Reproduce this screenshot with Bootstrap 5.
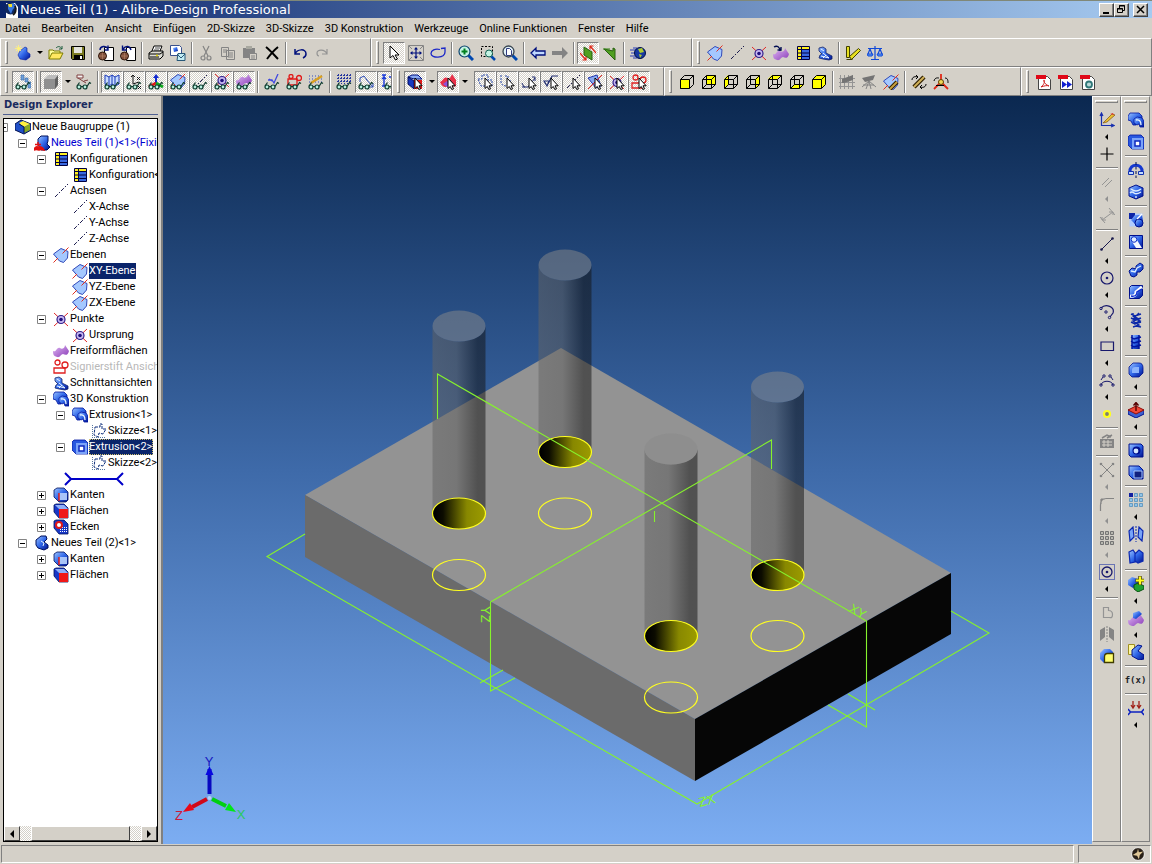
<!DOCTYPE html>
<html lang="de">
<head>
<meta charset="utf-8">
<meta name="viewport" content="width=device-width, initial-scale=1">
<title>Neues Teil (1) - Alibre-Design Professional</title>
<link href="https://cdn.jsdelivr.net/npm/bootstrap@5.3.0/dist/css/bootstrap.min.css" rel="stylesheet">
<style>
:root{--face:#d4d0c8;--shade:#808080;--ink:#000}
body{background:var(--face);font-family:Roboto,"Liberation Sans",sans-serif;font-size:11px;line-height:16px;color:var(--ink)}
svg{display:block;flex:none}
.titlebar{height:18px;border-top:1px solid #808878;background:linear-gradient(90deg,#0a246a,#a6caf0)}
.titlebar h1{font:13px/16px "DejaVu Sans",sans-serif;color:#fff;margin:0}
.winbtn{width:15px;height:14px;padding:0;border:1px solid;border-color:#fff #404040 #404040 #fff;border-radius:0;background:var(--face);box-shadow:inset -1px -1px var(--shade)}
.menubar{height:20px;gap:11px;padding:1px 5px 0}
.menubar a{color:#000;text-decoration:none}
.band{height:29px;border:1px solid;border-color:#fff var(--shade) var(--shade) #fff;padding-left:4px;overflow:hidden;min-width:0}
.grip{width:3px;height:23px;margin-right:4px;border:1px solid;border-color:#fff var(--shade) var(--shade) #fff;flex:none}
.tb{width:22px;height:22px;padding:0;border:1px solid transparent;border-radius:0;display:flex;align-items:center;justify-content:center;flex:none}
.tb svg,.icn{width:16px;height:16px}
.tb.active,.tb.active:hover{border-color:var(--shade) #fff #fff var(--shade);background:repeating-conic-gradient(#fff 0 25%,#d4d0c8 0 50%) 0 0/2px 2px}
.drop{width:11px;height:22px;padding:0;border:0;flex:none;background:none;display:flex;align-items:center;justify-content:center}
.drop::before{content:"";border:3px solid transparent;border-top-color:#000;border-bottom:0}
.vs{width:2px;height:22px;margin:0 2px;border-left:1px solid var(--shade);border-right:1px solid #fff;flex:none}
.w-a{flex:0 0 371px}.w-b{flex:0 0 321px}
.w-d{flex:0 0 392px}.w-e{flex:0 0 272px}.w-f{flex:0 0 357px}
.explorer{width:161px;padding:0 3px 2px;flex:none}
.explorer h2{font:bold 11px/18px "DejaVu Sans Condensed","DejaVu Sans",sans-serif;font-stretch:condensed;color:#1a2a5e;margin:0 0 3px;padding-left:1px;height:19px;border-bottom:1px solid #506090}
.treebox{background:#fff;border:1px solid #000;overflow:hidden;min-height:0}
.tree{white-space:nowrap}
.tree ul,ul.tree{list-style:none;margin:0;padding:0}
.tree ul{padding-left:19px}
ul.tree{margin-left:-10px}
.node{display:flex;height:16px;align-items:center}
.exp,.ico{width:19px;flex:none;display:flex;justify-content:center}
button.exp{border:0;background:none;padding:0}
.exp svg{width:9px;height:9px}
.sel{background:#0a246a;color:#fff;padding:0 1px 0 0}
.sel.focused{outline:1px dotted #d0c070;outline-offset:-1px}
.fixed-part{color:#0000d0}
.dimmed{color:#b8b8b8}
.rollback{margin-left:13px}
.hbar{height:15px;flex:none;background:repeating-conic-gradient(#fff 0 25%,#d4d0c8 0 50%) 0 0/2px 2px}
.hbar button{padding:0;border:1px solid;border-color:#fff #404040 #404040 #fff;background:var(--face);height:15px;width:16px;display:flex;align-items:center;justify-content:center}
.hbar .thumb{width:99px;margin:0 11px}
.workarea{min-height:0;padding-right:2px}
.view{border-left:2px solid var(--shade);background:linear-gradient(#0b2850,#3e6aa9 50%,#7cadf2);min-width:0;min-height:0}
.side{width:29px;flex:none;border:1px solid;border-color:#fff var(--shade) var(--shade) #fff;padding-top:3px;margin-bottom:2px;display:flex;flex-direction:column;align-items:center}
.side .grip{width:23px;height:3px;margin:0 0 6px}
.side .drop{width:22px;height:12px}
.side .drop::before{border:3px solid transparent;border-right-color:#000;border-left:0}
.side .drop:disabled::before{border-right-color:#909090}
.hs{width:22px;height:2px;margin:2px 0;border-top:1px solid var(--shade);border-bottom:1px solid #fff;flex:none}
.fx{font:bold 9px "DejaVu Sans Mono",monospace}
.status{height:20px;flex:none;padding:1px}
.pane{border:1px solid;border-color:var(--shade) #fff #fff var(--shade)}
.p-s{width:73px;padding-right:5px}
</style>
</head>
<body class="vh-100 d-flex flex-column overflow-hidden">

<svg width="0" height="0" class="position-absolute" aria-hidden="true">
<defs>
<linearGradient id="gb" x1="0" y1="0" x2="1" y2="1"><stop stop-color="#9cc4ff"/><stop offset=".5" stop-color="#2f66e8"/><stop offset="1" stop-color="#00108c"/></linearGradient>
<linearGradient id="gp" x1="0" y1="0" x2="1" y2="1"><stop stop-color="#e0b8f4"/><stop offset="1" stop-color="#8a3cb8"/></linearGradient>
<!-- overlays -->
<symbol id="glasses" viewBox="0 0 16 16"><g fill="#b8f0e0" stroke="#0b3a2c" stroke-width="1.2"><circle cx="3" cy="13" r="2"/><circle cx="9" cy="13" r="2"/><path d="M5 12.500h2M1 12l2.500-3.500M11 12.500l2.500-4 1.500 1" fill="none"/></g></symbol>
<symbol id="cur" viewBox="0 0 16 16"><path d="M8 4v10.500l2.300-2 1.500 3 1.700-.7-1.500-3h3.200z" fill="#fff" stroke="#000"/></symbol>
<!-- files -->
<symbol id="new" viewBox="0 0 16 16"><path d="M5 6l5-4 2 1v4l3 2v3l-4 3-6-1-2-4z" fill="url(#gb)" stroke="#0018a0" stroke-width=".6"/><path d="M3.500 0v7M0 3.500h7M1 1l5 5M6 1L1 6" stroke="#fff27c" stroke-width=".9"/></symbol>
<symbol id="open" viewBox="0 0 16 16"><path d="M1 14V5h4l1 1h6v3" fill="#ffff9c" stroke="#7c7c00"/><path d="M1 14l3-6h11l-3 6z" fill="#ffe860" stroke="#7c7c00"/><path d="M8 3c2-2 4-2 6 1M14 1v3h-3" fill="none" stroke="#1c5c3c"/></symbol>
<symbol id="save" viewBox="0 0 16 16"><path d="M1.500 1.500h13v13h-12l-1-1z" fill="#7a7a20" stroke="#000"/><path d="M4 2h8v6H4z" fill="#e4e4dc"/><path d="M4 10h9v4H4z" fill="#000"/><path d="M10 11h2v3h-2z" fill="#fff"/></symbol>
<symbol id="inbox" viewBox="0 0 16 16"><path d="M6.500 2.500h9v13h-9z" fill="#fff" stroke="#000"/><circle cx="4.500" cy="11" r="4" fill="#80503c" stroke="#30180c"/><path d="M1 11h7M4.500 8v6" stroke="#b88868" stroke-width=".6"/><path d="M2 5c0-4 6-5 8-1M10 .5V5H6.500" fill="none" stroke="#00107c" stroke-width="1.400"/></symbol>
<symbol id="outbox" viewBox="0 0 16 16"><path d="M6.500 2.500h9v13h-9z" fill="#fff" stroke="#000"/><circle cx="4.500" cy="11" r="4" fill="#80503c" stroke="#30180c"/><path d="M1 11h7M4.500 8v6" stroke="#b88868" stroke-width=".6"/><path d="M11 5C10 1 6 0 3 4M2.500 .5V5H7" fill="none" stroke="#00107c" stroke-width="1.400"/></symbol>
<symbol id="print" viewBox="0 0 16 16"><path d="M4 6l2-5h8l-2 5" fill="#fff" stroke="#000"/><path d="M7 3h5M6 5h5" stroke="#000" stroke-width=".7"/><path d="M1 8l3-2h11v5l-3 3H1z" fill="#dcdcd4" stroke="#000"/><path d="M1 9h11l3-2M2 12h9" fill="none" stroke="#000"/><path d="M8 10.500h2" stroke="#e8d800" stroke-width="1.500"/></symbol>
<symbol id="preview" viewBox="0 0 16 16"><path d="M.5.5h9l2 2v8h-11z" fill="#fff" stroke="#38508c"/><path d="M3 3l4-1 1 4-4 1z" fill="url(#gb)"/><path d="M7 15.500l1-7h7v7z" fill="#c4ecf4" stroke="#285878"/><path d="M7 9l4 4 4-4" fill="none" stroke="#285878"/></symbol>
<symbol id="cut" viewBox="0 0 16 16"><g fill="none" stroke="#848484" stroke-width="1.200"><path d="M5 1l5 10M11 1L6 11"/><circle cx="5" cy="13" r="2"/><circle cx="11" cy="13" r="2"/></g></symbol>
<symbol id="copy" viewBox="0 0 16 16"><path d="M1.500 2.500h7v9h-7zM6.500 5.500h8v9h-8z" fill="#d4d0c8" stroke="#848484"/><path d="M3 5h4M3 7h3M8 8h5M8 10h5M8 12h5" stroke="#848484"/></symbol>
<symbol id="paste" viewBox="0 0 16 16"><path d="M1 3h12v10H1z" fill="#848484"/><path d="M4 1h6v3H4z" fill="#a8a8a0"/><path d="M7.500 8.500h7v6h-7z" fill="#d4d0c8" stroke="#848484"/><path d="M9 11h4M9 13h4" stroke="#848484"/></symbol>
<symbol id="del" viewBox="0 0 16 16"><path d="M2 2c4 3 8 8 12 12M14 2C9 6 6 10 3 14" stroke="#000" stroke-width="2" fill="none"/></symbol>
<symbol id="undo" viewBox="0 0 16 16"><path d="M3 4v5h5M3 9c2-5 11-6 11 0 0 2-1 3-3 4" fill="none" stroke="#00107c" stroke-width="1.500"/></symbol>
<symbol id="redo" viewBox="0 0 16 16"><path d="M13 4v5H8M13 9C11 4 3 4 3 8c0 2 1 3 2 3" fill="none" stroke="#949494" stroke-width="1.200"/></symbol>
<!-- view -->
<symbol id="arrow" viewBox="0 0 16 16"><path d="M4 1v12l3-2.500L9.500 15l2-1-2.500-4h4z" fill="#fff" stroke="#000"/></symbol>
<symbol id="pan" viewBox="0 0 16 16"><path d="M.5.5h15v15H.5z" fill="none" stroke="#848484"/><path d="M1 1l3 3M15 1l-3 3M1 15l3-3M15 15l-3-3" stroke="#848484"/><path d="M8 3v10M3 8h10" stroke="#00107c" stroke-width="1.200"/><path d="M8 2l2 2.500H6zM8 14l2-2.500H6zM2 8l2.500-2v4zM14 8l-2.500-2v4z" fill="#00107c"/></symbol>
<symbol id="rot" viewBox="0 0 16 16"><path d="M10 4.500C5 3 1 5.500 1 8.500c0 5 14 5 14-1.500M11 3.500l4-.5v4" fill="none" stroke="#1c28c8" stroke-width="1.300"/></symbol>
<symbol id="zin" viewBox="0 0 16 16"><path d="M10 10l5 5" stroke="#0048b0" stroke-width="3"/><circle cx="6.500" cy="6.500" r="5.500" fill="#c4f4e4" stroke="#0c4470" stroke-width="1.200"/><path d="M6.500 3.500v6M3.500 6.500h6" stroke="#008020" stroke-width="2"/></symbol>
<symbol id="zwin" viewBox="0 0 16 16"><path d="M1.500 1.500h11v10h-11z" fill="none" stroke="#000" stroke-dasharray="2 1.500"/><path d="M11 11l4 4" stroke="#0048b0" stroke-width="2.500"/><circle cx="9" cy="8.500" r="3.500" fill="#c4f4e4" stroke="#0c6050"/></symbol>
<symbol id="zfit" viewBox="0 0 16 16"><path d="M10 10l5 5" stroke="#0048b0" stroke-width="3"/><circle cx="6.500" cy="6.500" r="5.500" fill="#e0f0f8" stroke="#384450" stroke-width="1.300"/><path d="M4.500 3.500h3l2 2v5h-5z" fill="#fff" stroke="#303c80"/></symbol>
<symbol id="back" viewBox="0 0 16 16"><path d="M1 8l5-5v3h9v4H6v3z" fill="#c0d8ff" stroke="#00107c" stroke-width="1.300"/></symbol>
<symbol id="fwd" viewBox="0 0 16 16"><path d="M16 8l-6-6v4H0v4h10v4z" fill="#848484"/></symbol>
<symbol id="gpl" viewBox="0 0 16 16"><path d="M4 2l8 5v8l-8-5z" fill="#50a020" stroke="#286010"/><path d="M0 8l6 7M2.500 15H6v-3.500M10 1l6 7M10 4.500V1h3.500" stroke="#e02818" stroke-width="1.200" fill="none"/></symbol>
<symbol id="gpl2" viewBox="0 0 16 16"><path d="M2 4l9 2V3l2 1v11z" fill="#50a020" stroke="#286010"/><path d="M1 4h7" stroke="#308010"/></symbol>
<symbol id="globe" viewBox="0 0 16 16"><path d="M0 5h8M1 8h6M0 11h8M3 3h4M3 13h4" stroke="#283cb8"/><circle cx="10" cy="8" r="5.500" fill="#1838a0" stroke="#001048"/><path d="M8 4l4-1 2 4-4 1zM9 9l3 1-2 3z" fill="#b0cc30"/></symbol>
<!-- reference geometry -->
<symbol id="plane" viewBox="0 0 16 16"><path d="M.5 7L8 1.500l7 3L14.500 11l-4 4.500-4-1.500z" fill="#a4c8ff" stroke="#3048b8"/><path d="M15.500.5L9.500 6.500M5 11L.5 15.500" stroke="#e03020"/></symbol>
<symbol id="axis" viewBox="0 0 16 16"><path d="M2 14L15 1" stroke="#18184c" stroke-dasharray="4 1.500 1.500 1.500"/></symbol>
<symbol id="point" viewBox="0 0 16 16"><path d="M1 2l14 13M15 2L1 15" stroke="#e02828"/><circle cx="8" cy="8.500" r="4" fill="#c8b8f0" stroke="#30208c" stroke-width="1.200"/><circle cx="8" cy="8.500" r="1.800" fill="#20107c"/></symbol>
<symbol id="surf" viewBox="0 0 16 16"><path d="M0 8c3 2 4-5 7-3 2 2 5 0 5-3l4 6c-1 5-4 4-6 3-2 0-3 4-6 3C1 13 0 12 0 8z" fill="url(#gp)"/></symbol>
<symbol id="surfn" viewBox="0 0 16 16"><use href="#surf" y="1"/><path d="M1 2c3-2 6 0 6 4M4.500 5H8V2" fill="none" stroke="#000c50" stroke-width="1.400"/></symbol>
<symbol id="table" viewBox="0 0 16 16"><path d="M2 2h12v12H2z" fill="#3868e0"/><path d="M2 2h4v12H2zM2 2h12v2H2z" fill="#fff020"/><path d="M2.500 1.500h12v13h-12zM6.500 2v12M2 4.500h12M2 8h12M2 11.500h12" fill="none" stroke="#000040"/></symbol>
<symbol id="sect" viewBox="0 0 16 16"><path d="M2 3l4-1 3 2v4l4 2 2 1v3l-3 1-6-1-4-1 1-3 2-1-3-3z" fill="url(#gb)" stroke="#102068" stroke-width=".8"/><path d="M4 4l3 2M6 8l6 5M4 11l8 2M6 13l3-3" stroke="#e8f4ff"/></symbol>
<symbol id="meas" viewBox="0 0 16 16"><path d="M1.500 1.500h3v11h-3zM4.500 11.500l9-8 2 2-9 9z" fill="#e8e020" stroke="#404000"/><path d="M1.500 14.500h6" stroke="#404000"/></symbol>
<symbol id="scale" viewBox="0 0 16 16"><path d="M8 1v13M4 14.500h8M1 3.500h14M3 4L1 9M3 4l2 5M13 4l-2 5M13 4l2 5" stroke="#1048d8" fill="none" stroke-width="1.200"/><path d="M0 9h6l-1 2H1zM10 9h6l-1 2h-4z" fill="#60a0f8" stroke="#1048d8"/></symbol>
<!-- visibility toggles -->
<symbol id="v1" viewBox="0 0 16 16"><path d="M6 1h3v5H6zM10 4h3v4h-3zM13 8h3v6h-3z" fill="#70a0d8" stroke="#3868a8" stroke-width=".6"/><use href="#glasses"/></symbol>
<symbol id="cube" viewBox="0 0 16 16"><path d="M1 5l4-4h10l-3 4z" fill="#bcbcbc"/><path d="M1 5h11v10H1z" fill="#909090"/><path d="M12 5l3-4v10l-3 4z" fill="#606060"/></symbol>
<symbol id="v2" viewBox="0 0 16 16"><path d="M1 1h6v3H1zM2 4l8 5M8 7l4-1" fill="#f4f4f4" stroke="#804040"/><use href="#glasses"/></symbol>
<symbol id="v3" viewBox="0 0 16 16"><path d="M1 1l4 2 3-2 3 2 4-2v9l-4 2-3-2-3 2-4-2zM5 3v8M8 1v9M11 3v8" fill="#c8dcff" stroke="#1838b8"/><use href="#glasses"/></symbol>
<symbol id="v4" viewBox="0 0 16 16"><path d="M7 10V1M5 3l2-2 2 2M11 3l3 3M14 3l-3 3M7 10l6-2M12 12l3 3M15 12l-3 3" fill="none" stroke="#181818"/><use href="#glasses"/></symbol>
<symbol id="v5" viewBox="0 0 16 16"><path d="M8 10V2" stroke="#1028d0" stroke-width="2"/><path d="M8 0l3 4H5z" fill="#1028d0"/><path d="M8 9l-7 4" stroke="#e01818" stroke-width="3"/><path d="M8 9l7 4" stroke="#10a820" stroke-width="3"/><use href="#glasses"/></symbol>
<symbol id="v6" viewBox="0 0 16 16"><use href="#plane" y="-1"/><use href="#glasses"/></symbol>
<symbol id="v7" viewBox="0 0 16 16"><use href="#axis"/><use href="#glasses"/></symbol>
<symbol id="v8" viewBox="0 0 16 16"><use href="#point" y="-2"/><use href="#glasses"/></symbol>
<symbol id="v9" viewBox="0 0 16 16"><use href="#surf" y="-2"/><use href="#glasses"/></symbol>
<symbol id="v10" viewBox="0 0 16 16"><path d="M4 6h4l2 3 4-9M5 5l3 2" fill="none" stroke="#4048e0" stroke-width="1.300"/><use href="#glasses"/></symbol>
<symbol id="v11" viewBox="0 0 16 16"><g fill="none" stroke="#e01818" stroke-width="1.300"><circle cx="5" cy="2.500" r="2"/><path d="M2 5h9v6H2z"/><circle cx="13" cy="4" r="2.500"/></g><use href="#glasses"/></symbol>
<symbol id="v12" viewBox="0 0 16 16"><path d="M1 2h14M1 5h14M1 8h14" stroke="#3048c0" stroke-dasharray="1 2"/><path d="M3 9L14 2" stroke="#d8a020" stroke-width="2.500"/><use href="#glasses"/></symbol>
<symbol id="v13" viewBox="0 0 16 16"><path d="M1 1.500h14M1 4.500h14M1 7.500h14M2.500 0v10M5.500 0v10M8.500 0v10M11.500 0v10M14.500 0v10" stroke="#2838a0" stroke-dasharray="2 1"/><use href="#glasses"/></symbol>
<symbol id="v14" viewBox="0 0 16 16"><path d="M2 8V4l4-2 3 4M8 5l7 8M15 9v4h-4" fill="none" stroke="#2848b0"/><use href="#glasses"/></symbol>
<symbol id="v15" viewBox="0 0 16 16"><path d="M2 1h4M4 1v11M2 12h4M4 3l-2 2M4 3l2 2M9 3h3" fill="none" stroke="#1838d8" stroke-width="1.400"/><use href="#glasses" x="4"/></symbol>
<!-- selection filters -->
<symbol id="s1" viewBox="0 0 16 16"><path d="M1 3l4-2h6l4 4H7z" fill="#88a8f0" stroke="#001080"/><path d="M1 3l6 4v8l-6-5z" fill="#1838c0" stroke="#000c60"/><path d="M7 6h8v9H7z" fill="#e01818"/><use href="#cur"/></symbol>
<symbol id="s2" viewBox="0 0 16 16"><path d="M0 8c3-1 4-6 7-4s4-2 5-4l4 6v6c-3 2-5-2-8 0s-6 1-8-4z" fill="#e83048"/><path d="M3 10l4-3 3 4-3 2z" fill="#9050d8"/><use href="#cur"/></symbol>
<symbol id="s3" viewBox="0 0 16 16"><path d="M1 5h4V1h6v5h4v6H4z" fill="none" stroke="#2848a8" stroke-dasharray="2 1"/><use href="#cur"/></symbol>
<symbol id="s4" viewBox="0 0 16 16"><path d="M2 1v7c0 4 6 5 9 3M6 2h3v5h4" fill="none" stroke="#2848a8" stroke-dasharray="2 1"/><use href="#cur"/></symbol>
<symbol id="s5" viewBox="0 0 16 16"><path d="M1 9l2 4h4l7-9M1 13h3M11 3h3v4" fill="none" stroke="#202c70"/><use href="#cur"/></symbol>
<symbol id="s6" viewBox="0 0 16 16"><path d="M1 7h5l-2 5zM5 10l4-8h6" fill="none" stroke="#202c70" stroke-width="1.200"/><use href="#cur"/></symbol>
<symbol id="s7" viewBox="0 0 16 16"><use href="#axis"/><use href="#cur"/></symbol>
<symbol id="s8" viewBox="0 0 16 16"><path d="M1 4l9-3 4 11-5 2z" fill="#88a8f0" stroke="#2438b0"/><path d="M15 1L1 15" stroke="#e02020"/><use href="#cur"/></symbol>
<symbol id="s9" viewBox="0 0 16 16"><use href="#point"/><use href="#cur"/></symbol>
<symbol id="red" viewBox="0 0 16 16"><g fill="none" stroke="#e02020" stroke-width="1.300"><circle cx="4.500" cy="3.500" r="2.500"/><circle cx="12" cy="6" r="3"/><path d="M1 9h11v5H1z"/></g></symbol>
<symbol id="s10" viewBox="0 0 16 16"><use href="#red"/><use href="#cur"/></symbol>
<!-- standard views -->
<symbol id="wire" viewBox="0 0 16 16"><path d="M1.500 5.500h9v9h-9zM5.500 1.500h9v9h-9zM1.500 5.500l4-4M10.500 5.500l4-4M1.500 14.500l4-4M10.500 14.500l4-4" fill="none" stroke="#000"/></symbol>
<symbol id="c1" viewBox="0 0 16 16"><path d="M1.500 5.500l4-4h9v9l-4 4h-9zM10.500 5.500l4-4" fill="none" stroke="#000"/><path d="M1.500 5.500h9v9h-9z" fill="#ff0" stroke="#000"/></symbol>
<symbol id="c2" viewBox="0 0 16 16"><path d="M5 1h10v10H5z" fill="#ff0"/><use href="#wire"/></symbol>
<symbol id="c3" viewBox="0 0 16 16"><path d="M1 5l4-4v10l-4 4z" fill="#ff0"/><use href="#wire"/></symbol>
<symbol id="c4" viewBox="0 0 16 16"><path d="M10 5l5-4v10l-5 4z" fill="#ff0"/><use href="#wire"/></symbol>
<symbol id="c5" viewBox="0 0 16 16"><path d="M1 5l4-4h10l-5 4z" fill="#ff0"/><use href="#wire"/></symbol>
<symbol id="c6" viewBox="0 0 16 16"><path d="M1 15l4-4h10l-5 4z" fill="#ff0"/><use href="#wire"/></symbol>
<symbol id="c7" viewBox="0 0 16 16"><path d="M1.500 5.500l4-4h9v9l-4 4h-9zM1.500 5.500h9v9M10.500 5.500l4-4" fill="#ff0" stroke="#000"/></symbol>
<symbol id="g1" viewBox="0 0 16 16"><path d="M1.500 1v14M5.500 1v14M9.500 1v14M13.500 1v14M0 4.500h16M0 8.500h16M0 12.500h16" stroke="#949494"/><path d="M3 5l11-4v5L5 9H3z" fill="#747474"/></symbol>
<symbol id="g2" viewBox="0 0 16 16"><path d="M1 4l13-3-2 5-8 2z" fill="#747474"/><path d="M8 7l-7 6M8 7l-3 8M8 7l2 8M8 7l7 6M2 11h11" stroke="#848484" fill="none"/></symbol>
<symbol id="g3" viewBox="0 0 16 16"><use href="#plane"/><path d="M7 15l7-7" stroke="#302000" stroke-width="4"/><path d="M7 15l7-7" stroke="#c8a040" stroke-width="2"/></symbol>
<symbol id="g4" viewBox="0 0 16 16"><path d="M3 13L13 3" stroke="#302000" stroke-width="4.500"/><path d="M3 13L13 3" stroke="#d0b058" stroke-width="2"/><path d="M1 6c0-3 3-4 6-3M15 10c0 3-3 4-6 3M5 1l2 2-2 2M11 11l-2 2 2 2" fill="none" stroke="#000"/></symbol>
<symbol id="g5" viewBox="0 0 16 16"><path d="M8 0v8L1 15M8 8l7 7" fill="none" stroke="#e02818" stroke-width="1.800"/><circle cx="8" cy="8" r="2.500" fill="#f0d858" stroke="#604000"/><path d="M1 7c1-4 4-3 5-3M12 4c3 0 3 3 3 5M3 11.500h8" fill="none" stroke="#000"/></symbol>
<symbol id="pdf" viewBox="0 0 16 16"><path d="M2.500 2.500h9l3 3v10h-12z" fill="#fff" stroke="#444"/><path d="M0 1h10v4H0z" fill="#e00818"/><path d="M5 13c4-3 4-7 3-7s0 4 5 6c-2-1-5 0-8 1z" fill="none" stroke="#d02020"/></symbol>
<symbol id="pdf2" viewBox="0 0 16 16"><path d="M2.500 2.500h9l3 3v10h-12z" fill="#fff" stroke="#444"/><path d="M0 1h10v4H0z" fill="#e00818"/><path d="M4 7l5 3.500L4 14zM9 7l5 3.500L9 14z" fill="#1020d0"/></symbol>
<symbol id="pdf3" viewBox="0 0 16 16"><path d="M2.500 2.500h9l3 3v10h-12z" fill="#fff" stroke="#444"/><path d="M0 1h10v4H0z" fill="#e00818"/><circle cx="9" cy="10.500" r="3" fill="#b8d8d8" stroke="#307878" stroke-width="1.800"/></symbol>
<!-- sketch tools -->
<symbol id="k1" viewBox="0 0 16 16"><path d="M2.500 1v12.500H15M1 4l1.500-3L4 4M12 12l3 1.500-3 1.500" fill="none" stroke="#1830b0" stroke-width="1.200"/><path d="M4 11l9-9 3 1-8 7z" fill="#e8c030" stroke="#805010" stroke-width=".7"/><path d="M11 2l3-1 1 2z" fill="#e04030"/></symbol>
<symbol id="k2" viewBox="0 0 16 16"><path d="M8 1.500v13M1.500 8h13" stroke="#000" stroke-width="1.200"/></symbol>
<symbol id="k3" viewBox="0 0 16 16"><path d="M3 11l7-7M6 13l7-7" stroke="#949494"/></symbol>
<symbol id="k4" viewBox="0 0 16 16"><path d="M3 12L14 4M1 9l5 6M10 0l6 7M3 9v3h4M10 4h4v3" fill="none" stroke="#949494"/></symbol>
<symbol id="k5" viewBox="0 0 16 16"><path d="M2.500 13.500L13.500 2.500" stroke="#18184c"/><circle cx="2.500" cy="13.500" r="1.300" fill="#18184c"/><circle cx="13.500" cy="2.500" r="1.300" fill="#18184c"/></symbol>
<symbol id="k6" viewBox="0 0 16 16"><circle cx="8" cy="8" r="6" fill="none" stroke="#18186c" stroke-width="1.200"/><circle cx="8" cy="8" r="1.300" fill="#18186c"/></symbol>
<symbol id="k7" viewBox="0 0 16 16"><path d="M2 4c5-5 14-1 12 5l-3 4" fill="none" stroke="#18186c" stroke-width="1.200"/><g fill="none" stroke="#18186c"><circle cx="2" cy="4.500" r="1.200"/><circle cx="7" cy="8" r="1.200"/><circle cx="10.500" cy="13.500" r="1.200"/></g></symbol>
<symbol id="k8" viewBox="0 0 16 16"><path d="M2 4h12.500v8.500H2z" fill="none" stroke="#18186c" stroke-width="1.200"/></symbol>
<symbol id="k9" viewBox="0 0 16 16"><path d="M2 13c1-5 11-5 12 0" fill="none" stroke="#18186c"/><g fill="none" stroke="#18186c"><circle cx="2" cy="13" r="1.200"/><circle cx="14" cy="13" r="1.200"/><circle cx="5" cy="4" r="1.200"/><circle cx="11" cy="4" r="1.200"/><path d="M2 8l2-3M12 5l2 3"/></g></symbol>
<symbol id="k10" viewBox="0 0 16 16"><circle cx="8" cy="8" r="3" fill="#808070" stroke="#ffff20" stroke-width="2.200"/></symbol>
<symbol id="k11" viewBox="0 0 16 16"><path d="M1 5h14v9H1z" fill="#848484"/><path d="M3 8h10M3 11h10M5 6v7M9 6v7" stroke="#d4d0c8"/><path d="M3 4l5-3 4 2M8 4l5-3" fill="none" stroke="#848484" stroke-width="1.500"/></symbol>
<symbol id="k12" viewBox="0 0 16 16"><path d="M2 2l12 12M14 2L2 14" stroke="#848484"/><g fill="#848484"><circle cx="2" cy="2" r="1.300"/><circle cx="14" cy="2" r="1.300"/><circle cx="2" cy="14" r="1.300"/><circle cx="14" cy="14" r="1.300"/></g></symbol>
<symbol id="k13" viewBox="0 0 16 16"><path d="M1.500 15V9q0-6.500 6-6.500H15M2 3h4M2 3v5" fill="none" stroke="#848484" stroke-width="1.200"/></symbol>
<symbol id="k14" viewBox="0 0 16 16"><path d="M1.500 1.500h3v3h-3zM6.500 1.500h3v3h-3zM11.500 1.500h3v3h-3zM1.500 6.500h3v3h-3zM6.500 6.500h3v3h-3zM11.500 6.500h3v3h-3zM1.500 11.500h3v3h-3zM6.500 11.500h3v3h-3zM11.500 11.500h3v3h-3z" fill="#b8b8b0" stroke="#747474"/></symbol>
<symbol id="k15" viewBox="0 0 16 16"><path d="M.5.5h15v15H.5z" fill="none" stroke="#0018a0" stroke-dasharray="1 1"/><circle cx="8" cy="8" r="5" fill="none" stroke="#18186c" stroke-width="1.300"/><circle cx="8" cy="8" r="1.300" fill="#18186c"/></symbol>
<symbol id="k16" viewBox="0 0 16 16"><path d="M4.500 3.500h5v3q4 0 4 4t-3 3h-6z" fill="none" stroke="#949494" stroke-width="1.200"/></symbol>
<symbol id="k17" viewBox="0 0 16 16"><path d="M1 4l5-3v10l-5 4zM15 4l-5-3v10l5 4z" fill="#848484"/><path d="M8 0v16" stroke="#848484" stroke-dasharray="2 1"/></symbol>
<symbol id="k18" viewBox="0 0 16 16"><path d="M1 5l4-4h6l3 3v7l-4 4H5l-4-4z" fill="url(#gb)"/><path d="M5.500 9q0-3.500 3-3.500h6v9h-9z" fill="#ffff70" stroke="#403c00" stroke-width="1.300"/></symbol>
<!-- features -->
<symbol id="f1" viewBox="0 0 16 16"><path d="M0 4l2-3h9l3 3v4H8v5H5L3 9 0 8z" fill="url(#gb)" stroke="#0014a0" stroke-width=".8"/><path d="M6 7l3-2 5 1 2 3v6h-4l-1-3-2 1-3-2z" fill="url(#gb)" stroke="#0014a0" stroke-width=".8"/><path d="M8 8q5-1 5 5" fill="none" stroke="#e8f4ff" stroke-width="1.300"/></symbol>
<symbol id="f2" viewBox="0 0 16 16"><path d="M0 3l2-2h11l3 3v11H4L0 11z" fill="#2858e0" stroke="#0014a0" stroke-width=".8"/><path d="M4 4h11v11H4z" fill="#7ca4f8"/><path d="M7 7h5v5H7z" fill="#fff" stroke="#0c28c0" stroke-width="1.500"/></symbol>
<symbol id="f3" viewBox="0 0 16 16"><path d="M2 10C1 1 15 1 14 10" fill="none" stroke="#1438d0" stroke-width="3"/><path d="M.5 9.500h5v3h-5zM10.500 9.500h5v3h-5z" fill="#c4dcff" stroke="#1030b0"/><path d="M8 0v16" stroke="#001050" stroke-dasharray="3 1.500"/></symbol>
<symbol id="f4" viewBox="0 0 16 16"><path d="M1 4l7-3 7 3v8l-7 3-7-3z" fill="url(#gb)" stroke="#00108c"/><path d="M3 5q5 4 10 0M2 9q2-2 4 0t7-1M8 12v2" fill="none" stroke="#dcecff" stroke-width="1.400"/></symbol>
<symbol id="f5" viewBox="0 0 16 16"><path d="M1.500 1.500h13v13h-13z" fill="#b0ccff"/><path d="M1 1h6v6H1z" fill="#0c24a8"/><path d="M7 3h7l1 6-3 3H7L3 8z" fill="url(#gb)"/><circle cx="11" cy="11" r="4" fill="url(#gb)" stroke="#00108c"/><path d="M9 7l5-5" stroke="#fff" stroke-width="1.500"/></symbol>
<symbol id="f6" viewBox="0 0 16 16"><path d="M1.500 1.500h13v13h-13z" fill="url(#gb)" stroke="#00108c"/><path d="M3 6l4-3 7 11H8z" fill="#f4f8ff"/><circle cx="6" cy="5.500" r="2.800" fill="#dcecff" stroke="#1030c8"/></symbol>
<symbol id="f7" viewBox="0 0 16 16"><path d="M1 9l3-3 4 1V4l4-3 3 2v4l-3 3H9v3l-3 2-3-1z" fill="url(#gb)" stroke="#00108c"/><path d="M3 9l4 1 2-4 4-2" fill="none" stroke="#e0f0ff" stroke-width="1.300"/></symbol>
<symbol id="f8" viewBox="0 0 16 16"><path d="M1.500 3.500l2-2h11v10l-3 3h-10z" fill="url(#gb)" stroke="#00108c"/><path d="M2 12q6 1 6-4l6-5" fill="none" stroke="#fff" stroke-width="3"/><path d="M3 12q6 1 6-4l5-3" fill="none" stroke="#1030d0" stroke-width="1.500"/></symbol>
<symbol id="f9" viewBox="0 0 16 16"><path d="M3 2l4 2 6-2M3 6l4 2 6-2M3 10l4 2 6-2M5 15l3-1 5 1M5 1v3l6 3-6 2 6 4-6 2M11 1l-5 5 6 3-6 3" fill="none" stroke="#0c28a8" stroke-width="1.400"/></symbol>
<symbol id="f10" viewBox="0 0 16 16"><path d="M4 1h7v14H4z" fill="url(#gb)"/><path d="M3 3l3 2 7-2M3 7l3 2 7-2M3 11l3 2 7-2M4 1v14M11 1v14" fill="none" stroke="#0014a0" stroke-width="1.500"/></symbol>
<symbol id="f11" viewBox="0 0 16 16"><path d="M1 5l4-4h6q4 0 4 5v5l-4 4H4l-3-3z" fill="url(#gb)" stroke="#00108c" stroke-width=".8"/><path d="M4 9V8q0-3 3-3h4v6H4z" fill="#8cb4fc"/></symbol>
<symbol id="f12" viewBox="0 0 16 16"><path d="M0 8v4l8 4 8-4V8z" fill="#3c60d0" stroke="#00108c"/><path d="M0 8l8-4 8 4-8 4z" fill="#f04838" stroke="#900c08"/><path d="M8 9V1M5.500 3.500L8 .5l2.500 3" stroke="#500" fill="none" stroke-width="1.400"/></symbol>
<symbol id="f13" viewBox="0 0 16 16"><path d="M1 2h12l2 2v11H3l-2-2z" fill="url(#gb)" stroke="#00108c"/><circle cx="8.500" cy="8.500" r="4" fill="#001090"/><circle cx="8" cy="9" r="2.400" fill="#d4e8ff"/></symbol>
<symbol id="f14" viewBox="0 0 16 16"><path d="M1 2h10l4 4v9H5l-4-4z" fill="url(#gb)" stroke="#00108c"/><path d="M6 7h8v7H6z" fill="#102080" stroke="#a8c8ff"/></symbol>
<symbol id="f15" viewBox="0 0 16 16"><path d="M1 1h4v4H1z" fill="#1020a0"/><path d="M6.500 1.500h3v3h-3zM11.500 1.500h3v3h-3zM1.500 6.500h3v3h-3zM6.500 6.500h3v3h-3zM11.500 6.500h3v3h-3zM1.500 11.500h3v3h-3zM6.500 11.500h3v3h-3zM11.500 11.500h3v3h-3z" fill="#90c4e8" stroke="#4888b8" stroke-width=".7"/></symbol>
<symbol id="f16" viewBox="0 0 16 16"><path d="M1 5l4-4 1 10-4 4zM15 5l-4-4-1 10 4 4z" fill="#78a4f8" stroke="#0c28b0" stroke-width="1.200"/><path d="M8 0v16" stroke="#0c28b0" stroke-dasharray="2 1"/></symbol>
<symbol id="f17" viewBox="0 0 16 16"><path d="M1 4l4-2 2 3v9l-5 1zM7 6l4-4 4 3v8l-5 2-3-2z" fill="url(#gb)" stroke="#0c28b0" stroke-width="1.200"/></symbol>
<symbol id="f18" viewBox="0 0 16 16"><path d="M0 4l4-3 6 2v7l-5 2-5-3z" fill="url(#gb)"/><path d="M6 9l4-2 6 3v3l-6 3-4-3z" fill="#20a030" stroke="#085010"/><path d="M12 0v9M7.500 4.500h8.500" stroke="#504800" stroke-width="3.500"/><path d="M12 .5v8M8 4.500h8" stroke="#ffff20" stroke-width="2"/></symbol>
<symbol id="f19" viewBox="0 0 16 16"><use href="#surf" y="2"/><path d="M5 3l6-2 3 3-6 5-3-1z" fill="url(#gb)"/></symbol>
<symbol id="f20" viewBox="0 0 16 16"><path d="M.5.500h6v10h-6z" fill="#fff8a0" stroke="#a09020"/><path d="M4 6l6-5 4 1-4 5 6 4v4l-5 1-7-4z" fill="url(#gb)" stroke="#00108c"/></symbol>
<symbol id="f22" viewBox="0 0 16 16"><path d="M5 1v6M11 1v6M3 5l2 3 2-3M9 5l2 3 2-3" fill="none" stroke="#a02018" stroke-width="1.300"/><path d="M0 9l2.500 3L0 15M16 9l-2.500 3 2.500 3M2 12h12" fill="none" stroke="#0c20c0" stroke-width="1.500"/></symbol>
<!-- tree -->
<symbol id="asm" viewBox="0 0 16 16"><path d="M0 5l6-4 5 2 5 2v6l-7 4-9-4z" fill="#2050c8" stroke="#001050"/><path d="M4 4l4-2 7 3-6 3z" fill="#fff040"/><path d="M9 8l6-3v6l-6 3z" fill="#88a820"/><path d="M4 5l5 3v6" fill="none" stroke="#001050"/></symbol>
<symbol id="part" viewBox="0 0 16 16"><path d="M2 5l5-4h5l1 3-3 3 4 3v3l-4 2-6-2-2-3z" fill="url(#gb)" stroke="#00105c"/><path d="M7 6l3 2-1 3" fill="none" stroke="#e0f0ff"/></symbol>
<symbol id="partfix" viewBox="0 0 16 16"><path d="M4 4l3-3h7v5l-1 3 3 3-3 3H7L4 9z" fill="url(#gb)" stroke="#00105c"/><path d="M4 7v4M1 9.500h6M0 15q1-4 4-3 4-1 6 3-3-1-5 0-3-1-5 0z" stroke="#e01010" fill="#e01010" stroke-width="1.400"/></symbol>
<symbol id="sketch" viewBox="0 0 16 16"><path d="M1.500 2v12M1 14.500h13" stroke="#5878a0" stroke-dasharray="1 1"/><path d="M4 4h5V1h2v5h4l-3 5-4-1-1 4-4-2z" fill="none" stroke="#10307c" stroke-dasharray="3 1"/></symbol>
<symbol id="edges" viewBox="0 0 16 16"><path d="M1 3l3-2h7l4 4v8l-2 2H6l-5-5z" fill="url(#gb)" stroke="#00105c" stroke-width=".8"/><path d="M6 6h8v7H6z" fill="#a8c4f8"/><path d="M6 6v8" stroke="#e01818" stroke-width="1.500"/></symbol>
<symbol id="faces" viewBox="0 0 16 16"><path d="M1 2l2-1h8l4 4v10H6l-5-6z" fill="#1838c8" stroke="#00105c" stroke-width=".8"/><path d="M2 2h9l4 4H6z" fill="#90b0f8"/><path d="M6 6h9v9H6z" fill="#f01818"/></symbol>
<symbol id="verts" viewBox="0 0 16 16"><path d="M1 2l2-1h8l4 4v10H6l-5-6z" fill="#1838c8" stroke="#00105c" stroke-width=".8"/><path d="M7 8.500h8M7 10.500h8M7 12.500h8" stroke="#fff" stroke-dasharray="1 1"/><circle cx="6" cy="6" r="3" fill="#fff" stroke="#e01818" stroke-width="2"/></symbol>
<symbol id="minus" viewBox="0 0 9 9"><path d="M.5.5h8v8h-8z" fill="#fff" stroke="#848484"/><path d="M2 4.500h5" stroke="#000"/></symbol>
<symbol id="plus" viewBox="0 0 9 9"><path d="M.5.5h8v8h-8z" fill="#fff" stroke="#848484"/><path d="M2 4.500h5M4.500 2v5" stroke="#000"/></symbol>
<symbol id="logo" viewBox="0 0 16 16"><path d="M2 1h9l3 4v11H2z" fill="#fff"/><circle cx="6.500" cy="6.500" r="6" fill="#102860"/><path d="M4 3l5-2 3 4-3 2-2 5-3-5z" fill="#3878e0"/><path d="M4 2h4v3H5z" fill="#f0e030"/><path d="M9 13q4-3 2-9" fill="none" stroke="#181818" stroke-width="1.800"/></symbol>
<symbol id="net" viewBox="0 0 16 16"><circle cx="8" cy="8" r="7.300" fill="#282018" stroke="#fff"/><path d="M2 9l5-3 1-4 1 4 5-1-4 4-1 5-2-4z" fill="#e0c898"/></symbol>
</defs>
</svg>

<header class="titlebar d-flex align-items-center ps-1 pe-1 flex-shrink-0">
  <svg class="icn"><use href="#logo"/></svg>
  <h1 class="flex-grow-1 text-nowrap">Neues Teil (1) - Alibre-Design Professional</h1>
  <button class="winbtn" aria-label="Minimieren"><svg width="13" height="12"><path d="M3 9h6" stroke="#000" stroke-width="2"/></svg></button>
  <button class="winbtn me-1" aria-label="Wiederherstellen"><svg width="13" height="12"><path d="M4.500 4V1.500h5v5H8M4 2h6M2.500 4.500h5v4h-5zM2 5h6" fill="none" stroke="#000"/></svg></button>
  <button class="winbtn" aria-label="Schließen"><svg width="13" height="12"><path d="M3 2l7 7M10 2L3 9" stroke="#000" stroke-width="1.500"/></svg></button>
</header>

<nav class="menubar d-flex align-items-center flex-shrink-0 text-nowrap" aria-label="Hauptmenü">
  <a href="#">Datei</a><a href="#">Bearbeiten</a><a href="#">Ansicht</a><a href="#">Einfügen</a><a href="#">2D-Skizze</a><a href="#">3D-Skizze</a><a href="#">3D Konstruktion</a><a href="#">Werkzeuge</a><a href="#">Online Funktionen</a><a href="#">Fenster</a><a href="#">Hilfe</a>
</nav>

<div class="d-flex flex-shrink-0">
  <div class="band w-a d-flex align-items-center" role="toolbar" aria-label="Standard">
    <span class="grip"></span>
    <button class="btn tb" aria-label="Neu"><svg><use href="#new"/></svg></button><button class="drop" aria-label="Neu, Auswahl"></button>
    <button class="btn tb" aria-label="Öffnen"><svg><use href="#open"/></svg></button>
    <button class="btn tb" aria-label="Speichern"><svg><use href="#save"/></svg></button><span class="vs"></span>
    <button class="btn tb" aria-label="Auschecken"><svg><use href="#inbox"/></svg></button>
    <button class="btn tb" aria-label="Einchecken"><svg><use href="#outbox"/></svg></button><span class="vs"></span>
    <button class="btn tb" aria-label="Drucken"><svg><use href="#print"/></svg></button>
    <button class="btn tb" aria-label="Senden"><svg><use href="#preview"/></svg></button><span class="vs"></span>
    <button class="btn tb" aria-label="Ausschneiden"><svg><use href="#cut"/></svg></button>
    <button class="btn tb" aria-label="Kopieren"><svg><use href="#copy"/></svg></button>
    <button class="btn tb" aria-label="Einfügen"><svg><use href="#paste"/></svg></button>
    <button class="btn tb" aria-label="Löschen"><svg><use href="#del"/></svg></button><span class="vs"></span>
    <button class="btn tb" aria-label="Rückgängig"><svg><use href="#undo"/></svg></button>
    <button class="btn tb" aria-label="Wiederholen"><svg><use href="#redo"/></svg></button>
  </div>
  <div class="band w-b d-flex align-items-center" role="toolbar" aria-label="Ansicht">
    <span class="grip"></span>
    <button class="btn tb active" aria-label="Auswählen"><svg><use href="#arrow"/></svg></button>
    <button class="btn tb" aria-label="Verschieben"><svg><use href="#pan"/></svg></button>
    <button class="btn tb" aria-label="Drehen"><svg><use href="#rot"/></svg></button><span class="vs"></span>
    <button class="btn tb" aria-label="Vergrößern"><svg><use href="#zin"/></svg></button>
    <button class="btn tb" aria-label="Zoom Fenster"><svg><use href="#zwin"/></svg></button>
    <button class="btn tb" aria-label="Einpassen"><svg><use href="#zfit"/></svg></button><span class="vs"></span>
    <button class="btn tb" aria-label="Vorherige Ansicht"><svg><use href="#back"/></svg></button>
    <button class="btn tb" aria-label="Nächste Ansicht"><svg><use href="#fwd"/></svg></button><span class="vs"></span>
    <button class="btn tb active" aria-label="Ebene ausrichten"><svg><use href="#gpl"/></svg></button>
    <button class="btn tb" aria-label="Auf Ebene schauen"><svg><use href="#gpl2"/></svg></button><span class="vs"></span>
    <button class="btn tb" aria-label="Online"><svg><use href="#globe"/></svg></button>
  </div>
  <div class="band flex-fill d-flex align-items-center" role="toolbar" aria-label="Referenzgeometrie">
    <span class="grip"></span>
    <button class="btn tb" aria-label="Ebene"><svg><use href="#plane"/></svg></button>
    <button class="btn tb" aria-label="Achse"><svg><use href="#axis"/></svg></button>
    <button class="btn tb" aria-label="Punkt"><svg><use href="#point"/></svg></button>
    <button class="btn tb" aria-label="Fläche"><svg><use href="#surfn"/></svg></button>
    <button class="btn tb" aria-label="Konfiguration"><svg><use href="#table"/></svg></button>
    <button class="btn tb" aria-label="Schnitt"><svg><use href="#sect"/></svg></button><span class="vs"></span>
    <button class="btn tb" aria-label="Messen"><svg><use href="#meas"/></svg></button>
    <button class="btn tb" aria-label="Masse"><svg><use href="#scale"/></svg></button>
  </div>
</div>

<div class="d-flex flex-shrink-0">
  <div class="band w-d d-flex align-items-center" role="toolbar" aria-label="Sichtbarkeit">
    <span class="grip"></span>
    <button class="btn tb active" aria-label="Teile anzeigen"><svg><use href="#v1"/></svg></button><span class="vs"></span>
    <button class="btn tb active" aria-label="Schattiert"><svg><use href="#cube"/></svg></button><button class="drop" aria-label="Darstellung, Auswahl"></button>
    <button class="btn tb" aria-label="Bemaßung anzeigen"><svg><use href="#v2"/></svg></button><span class="vs"></span>
    <button class="btn tb active" aria-label="Muster anzeigen"><svg><use href="#v3"/></svg></button>
    <button class="btn tb active" aria-label="Achsenkreuz anzeigen"><svg><use href="#v4"/></svg></button>
    <button class="btn tb active" aria-label="Triade anzeigen"><svg><use href="#v5"/></svg></button>
    <button class="btn tb active" aria-label="Ebenen anzeigen"><svg><use href="#v6"/></svg></button>
    <button class="btn tb active" aria-label="Achsen anzeigen"><svg><use href="#v7"/></svg></button>
    <button class="btn tb active" aria-label="Punkte anzeigen"><svg><use href="#v8"/></svg></button>
    <button class="btn tb active" aria-label="Flächen anzeigen"><svg><use href="#v9"/></svg></button><span class="vs"></span>
    <button class="btn tb" aria-label="Skizzen anzeigen"><svg><use href="#v10"/></svg></button>
    <button class="btn tb" aria-label="Signierstift anzeigen"><svg><use href="#v11"/></svg></button>
    <button class="btn tb" aria-label="Hilfslinien anzeigen"><svg><use href="#v12"/></svg></button><span class="vs"></span>
    <button class="btn tb" aria-label="Raster anzeigen"><svg><use href="#v13"/></svg></button>
    <button class="btn tb active" aria-label="Bedingungen anzeigen"><svg><use href="#v14"/></svg></button>
    <button class="btn tb active" aria-label="Maße anzeigen"><svg><use href="#v15"/></svg></button>
  </div>
  <div class="band w-e d-flex align-items-center" role="toolbar" aria-label="Auswahlfilter">
    <span class="grip"></span>
    <button class="btn tb active" aria-label="Flächen auswählen"><svg><use href="#s1"/></svg></button><button class="drop" aria-label="Flächen, Auswahl"></button>
    <button class="btn tb active" aria-label="Freiform auswählen"><svg><use href="#s2"/></svg></button><button class="drop" aria-label="Freiform, Auswahl"></button>
    <button class="btn tb active ms-1" aria-label="Skizze auswählen"><svg><use href="#s3"/></svg></button>
    <button class="btn tb active" aria-label="Kurve auswählen"><svg><use href="#s4"/></svg></button>
    <button class="btn tb active" aria-label="Maß auswählen"><svg><use href="#s5"/></svg></button>
    <button class="btn tb active" aria-label="Notiz auswählen"><svg><use href="#s6"/></svg></button>
    <button class="btn tb active" aria-label="Achse auswählen"><svg><use href="#s7"/></svg></button>
    <button class="btn tb active" aria-label="Ebene auswählen"><svg><use href="#s8"/></svg></button>
    <button class="btn tb active" aria-label="Punkt auswählen"><svg><use href="#s9"/></svg></button>
    <button class="btn tb active" aria-label="Signierstift auswählen"><svg><use href="#s10"/></svg></button>
  </div>
  <div class="band w-f d-flex align-items-center" role="toolbar" aria-label="Standardansichten">
    <span class="grip"></span>
    <button class="btn tb" aria-label="Vorne"><svg><use href="#c1"/></svg></button>
    <button class="btn tb" aria-label="Hinten"><svg><use href="#c2"/></svg></button>
    <button class="btn tb" aria-label="Links"><svg><use href="#c3"/></svg></button>
    <button class="btn tb" aria-label="Rechts"><svg><use href="#c4"/></svg></button>
    <button class="btn tb" aria-label="Oben"><svg><use href="#c5"/></svg></button>
    <button class="btn tb" aria-label="Unten"><svg><use href="#c6"/></svg></button>
    <button class="btn tb" aria-label="Isometrisch"><svg><use href="#c7"/></svg></button><span class="vs"></span>
    <button class="btn tb" aria-label="Raster"><svg><use href="#g1"/></svg></button>
    <button class="btn tb" aria-label="Projizieren"><svg><use href="#g2"/></svg></button>
    <button class="btn tb" aria-label="Auf Ebene"><svg><use href="#g3"/></svg></button><span class="vs"></span>
    <button class="btn tb" aria-label="Ansicht drehen"><svg><use href="#g4"/></svg></button>
    <button class="btn tb" aria-label="Blickpunkt"><svg><use href="#g5"/></svg></button>
  </div>
  <div class="band flex-fill d-flex align-items-center" role="toolbar" aria-label="PDF">
    <span class="grip"></span>
    <button class="btn tb" aria-label="PDF erstellen"><svg><use href="#pdf"/></svg></button>
    <button class="btn tb" aria-label="PDF senden"><svg><use href="#pdf2"/></svg></button>
    <button class="btn tb" aria-label="PDF Optionen"><svg><use href="#pdf3"/></svg></button>
  </div>
</div>

<main class="workarea d-flex flex-grow-1">
  <aside class="explorer d-flex flex-column">
    <h2>Design Explorer</h2>
    <div class="treebox d-flex flex-column flex-grow-1">
      <div class="flex-grow-1 overflow-hidden">
      <ul class="tree">
        <li><div class="node"><button class="exp" aria-label="Zuklappen"><svg><use href="#minus"/></svg></button><span class="ico"><svg class="icn"><use href="#asm"/></svg></span><span>Neue Baugruppe (1)</span></div>
        <ul>
          <li><div class="node"><button class="exp" aria-label="Zuklappen"><svg><use href="#minus"/></svg></button><span class="ico"><svg class="icn"><use href="#partfix"/></svg></span><span class="fixed-part">Neues Teil (1)&lt;1&gt;(Fixie</span></div>
          <ul>
            <li><div class="node"><button class="exp" aria-label="Zuklappen"><svg><use href="#minus"/></svg></button><span class="ico"><svg class="icn"><use href="#table"/></svg></span><span>Konfigurationen</span></div>
              <ul><li><div class="node"><span class="exp"></span><span class="ico"><svg class="icn"><use href="#table"/></svg></span><span>Konfiguration&lt;</span></div></li></ul></li>
            <li><div class="node"><button class="exp" aria-label="Zuklappen"><svg><use href="#minus"/></svg></button><span class="ico"><svg class="icn"><use href="#axis"/></svg></span><span>Achsen</span></div>
              <ul>
                <li><div class="node"><span class="exp"></span><span class="ico"><svg class="icn"><use href="#axis"/></svg></span><span>X-Achse</span></div></li>
                <li><div class="node"><span class="exp"></span><span class="ico"><svg class="icn"><use href="#axis"/></svg></span><span>Y-Achse</span></div></li>
                <li><div class="node"><span class="exp"></span><span class="ico"><svg class="icn"><use href="#axis"/></svg></span><span>Z-Achse</span></div></li>
              </ul></li>
            <li><div class="node"><button class="exp" aria-label="Zuklappen"><svg><use href="#minus"/></svg></button><span class="ico"><svg class="icn"><use href="#plane"/></svg></span><span>Ebenen</span></div>
              <ul>
                <li><div class="node"><span class="exp"></span><span class="ico"><svg class="icn"><use href="#plane"/></svg></span><span class="sel">XY-Ebene</span></div></li>
                <li><div class="node"><span class="exp"></span><span class="ico"><svg class="icn"><use href="#plane"/></svg></span><span>YZ-Ebene</span></div></li>
                <li><div class="node"><span class="exp"></span><span class="ico"><svg class="icn"><use href="#plane"/></svg></span><span>ZX-Ebene</span></div></li>
              </ul></li>
            <li><div class="node"><button class="exp" aria-label="Zuklappen"><svg><use href="#minus"/></svg></button><span class="ico"><svg class="icn"><use href="#point"/></svg></span><span>Punkte</span></div>
              <ul><li><div class="node"><span class="exp"></span><span class="ico"><svg class="icn"><use href="#point"/></svg></span><span>Ursprung</span></div></li></ul></li>
            <li><div class="node"><span class="exp"></span><span class="ico"><svg class="icn"><use href="#surf"/></svg></span><span>Freiformflächen</span></div></li>
            <li><div class="node"><span class="exp"></span><span class="ico"><svg class="icn"><use href="#red"/></svg></span><span class="dimmed">Signierstift Ansicht</span></div></li>
            <li><div class="node"><span class="exp"></span><span class="ico"><svg class="icn"><use href="#sect"/></svg></span><span>Schnittansichten</span></div></li>
            <li><div class="node"><button class="exp" aria-label="Zuklappen"><svg><use href="#minus"/></svg></button><span class="ico"><svg class="icn"><use href="#f1"/></svg></span><span>3D Konstruktion</span></div>
              <ul>
                <li><div class="node"><button class="exp" aria-label="Zuklappen"><svg><use href="#minus"/></svg></button><span class="ico"><svg class="icn"><use href="#f1"/></svg></span><span>Extrusion&lt;1&gt;</span></div>
                  <ul><li><div class="node"><span class="exp"></span><span class="ico"><svg class="icn"><use href="#sketch"/></svg></span><span>Skizze&lt;1&gt;</span></div></li></ul></li>
                <li><div class="node"><button class="exp" aria-label="Zuklappen"><svg><use href="#minus"/></svg></button><span class="ico"><svg class="icn"><use href="#f2"/></svg></span><span class="sel focused">Extrusion&lt;2&gt;</span></div>
                  <ul><li><div class="node"><span class="exp"></span><span class="ico"><svg class="icn"><use href="#sketch"/></svg></span><span>Skizze&lt;2&gt;</span></div></li></ul></li>
              </ul></li>
            <li><div class="node"><span class="exp"></span><svg class="rollback" width="60" height="14" role="img" aria-label="Rückführung"><path d="M1 1l6 6-6 6M59 1l-6 6 6 6" fill="none" stroke="#0000c8" stroke-width="2"/><path d="M7 7h46" stroke="#0000c8" stroke-width="2"/></svg></div></li>
            <li><div class="node"><button class="exp" aria-label="Aufklappen"><svg><use href="#plus"/></svg></button><span class="ico"><svg class="icn"><use href="#edges"/></svg></span><span>Kanten</span></div></li>
            <li><div class="node"><button class="exp" aria-label="Aufklappen"><svg><use href="#plus"/></svg></button><span class="ico"><svg class="icn"><use href="#faces"/></svg></span><span>Flächen</span></div></li>
            <li><div class="node"><button class="exp" aria-label="Aufklappen"><svg><use href="#plus"/></svg></button><span class="ico"><svg class="icn"><use href="#verts"/></svg></span><span>Ecken</span></div></li>
          </ul></li>
          <li><div class="node"><button class="exp" aria-label="Zuklappen"><svg><use href="#minus"/></svg></button><span class="ico"><svg class="icn"><use href="#part"/></svg></span><span>Neues Teil (2)&lt;1&gt;</span></div>
          <ul>
            <li><div class="node"><button class="exp" aria-label="Aufklappen"><svg><use href="#plus"/></svg></button><span class="ico"><svg class="icn"><use href="#edges"/></svg></span><span>Kanten</span></div></li>
            <li><div class="node"><button class="exp" aria-label="Aufklappen"><svg><use href="#plus"/></svg></button><span class="ico"><svg class="icn"><use href="#faces"/></svg></span><span>Flächen</span></div></li>
          </ul></li>
        </ul></li>
      </ul>
      </div>
      <div class="hbar d-flex">
        <button aria-label="Nach links"><svg width="8" height="8"><path d="M6 0v8L2 4z"/></svg></button>
        <button class="thumb" aria-label="Bildlauf"></button>
        <button aria-label="Nach rechts"><svg width="8" height="8"><path d="M2 0v8l4-4z"/></svg></button>
      </div>
    </div>
  </aside>

  <section class="view flex-grow-1" aria-label="3D-Ansicht">
    <svg class="w-100 h-100" viewBox="163 98 929 746" preserveAspectRatio="xMidYMid meet">
      <defs>
        <linearGradient id="cyl"><stop stop-color="#646464"/><stop offset=".45" stop-color="#5c5c5c"/><stop offset=".85" stop-color="#141414"/><stop offset="1" stop-color="#141414"/></linearGradient>
        <linearGradient id="hole"><stop offset=".05" stop-color="#000"/><stop offset=".2" stop-color="#0c0c00"/><stop offset=".65" stop-color="#888800"/><stop offset="1" stop-color="#9c9c00"/></linearGradient>
        <g id="rod"><path d="M-26.500 0V187H26.500V0A26.500 15.500 0 0 1-26.500 0z" fill="url(#cyl)" opacity=".52"/><ellipse rx="26.500" ry="15.500" fill="#8a8a8a" opacity=".5"/></g>
        <ellipse id="ring" rx="26.500" ry="15.500" stroke="#ffff20" stroke-width="1.200"/>
      </defs>
      <path d="M561 349L951 574 695 720 305 496z" fill="#939393"/>
      <path d="M305 496L695 720V782L305 558z" fill="#6b6b6b"/>
      <path d="M695 720L951 574V635L695 782z" fill="#060606"/>
      <use href="#rod" x="565" y="266"/><use href="#rod" x="459" y="327"/><use href="#rod" x="777.500" y="388"/><use href="#rod" x="671" y="450"/>
      <g fill="url(#hole)"><use href="#ring" x="565" y="453"/><use href="#ring" x="459" y="514.500"/><use href="#ring" x="777.500" y="576"/><use href="#ring" x="671" y="637"/></g>
      <g fill="none"><use href="#ring" x="565" y="514.500"/><use href="#ring" x="459" y="576"/><use href="#ring" x="777.500" y="637"/><use href="#ring" x="671" y="698.500"/></g>
      <g fill="none" stroke="#86f22c" stroke-width="1.100">
        <path d="M305 535L267 557.500 697 805 989 634 951 612"/>
        <path d="M437.500 420V375L866.500 622V728L828 706M848 695L875 711"/>
        <path d="M771.500 470V441L490.500 603V692L515 679M480 684L503 671M654.500 512V523"/>
      </g>
      <g fill="#86f22c" font-family="Liberation Sans, sans-serif" font-size="13">
        <text transform="translate(848 612) rotate(30)">XY</text>
        <text transform="translate(481 607) rotate(90)">YZ</text>
        <text transform="translate(700 808) rotate(-15)">ZX</text>
      </g>
      <path d="M209.500 795V770" stroke="#0808c0" stroke-width="4"/><path d="M209.500 767l4 9h-8z" fill="#0808e0"/>
      <path d="M207 800L192 808" stroke="#d00818" stroke-width="4"/><path d="M183 813l7-9 4 7z" fill="#e80818"/>
      <path d="M212 800L226 807" stroke="#00d010" stroke-width="4"/><path d="M236 813l-7-9-4 7z" fill="#00e818"/>
      <circle cx="209.500" cy="799" r="2" fill="#b8d0f4"/>
      <g font-family="Liberation Sans, sans-serif" font-size="13" text-anchor="middle">
        <text x="209" y="767" fill="#1818c0">Y</text><text x="179" y="821" fill="#d01838">Z</text><text x="241" y="820" fill="#28c860">X</text>
      </g>
    </svg>
  </section>

  <div class="side" role="toolbar" aria-label="Skizzierwerkzeuge">
    <span class="grip"></span>
    <button class="btn tb" aria-label="Skizze aktivieren"><svg><use href="#k1"/></svg></button><button class="drop" aria-label="Mehr"></button>
    <button class="btn tb" aria-label="Referenz"><svg><use href="#k2"/></svg></button><span class="hs"></span>
    <button class="btn tb" aria-label="Parallel"><svg><use href="#k3"/></svg></button><button class="drop" disabled aria-label="Mehr"></button>
    <button class="btn tb" aria-label="Bemaßung"><svg><use href="#k4"/></svg></button><span class="hs"></span>
    <button class="btn tb" aria-label="Linie"><svg><use href="#k5"/></svg></button><button class="drop" aria-label="Mehr"></button>
    <button class="btn tb" aria-label="Kreis"><svg><use href="#k6"/></svg></button><button class="drop" aria-label="Mehr"></button>
    <button class="btn tb" aria-label="Bogen"><svg><use href="#k7"/></svg></button><button class="drop" aria-label="Mehr"></button>
    <button class="btn tb" aria-label="Rechteck"><svg><use href="#k8"/></svg></button><button class="drop" aria-label="Mehr"></button>
    <button class="btn tb" aria-label="Spline"><svg><use href="#k9"/></svg></button><button class="drop" aria-label="Mehr"></button>
    <button class="btn tb" aria-label="Knoten"><svg><use href="#k10"/></svg></button><span class="hs"></span>
    <button class="btn tb" aria-label="Direkteingabe"><svg><use href="#k11"/></svg></button><span class="hs"></span>
    <button class="btn tb" aria-label="Trimmen"><svg><use href="#k12"/></svg></button><button class="drop" disabled aria-label="Mehr"></button>
    <button class="btn tb" aria-label="Abrunden"><svg><use href="#k13"/></svg></button><button class="drop" disabled aria-label="Mehr"></button>
    <button class="btn tb" aria-label="Muster"><svg><use href="#k14"/></svg></button><button class="drop" disabled aria-label="Mehr"></button>
    <button class="btn tb" aria-label="Auswahl"><svg><use href="#k15"/></svg></button><button class="drop" aria-label="Mehr"></button><span class="hs"></span>
    <button class="btn tb" aria-label="Versatz"><svg><use href="#k16"/></svg></button>
    <button class="btn tb" aria-label="Spiegeln"><svg><use href="#k17"/></svg></button>
    <button class="btn tb" aria-label="Projektion"><svg><use href="#k18"/></svg></button>
  </div>
  <div class="side" role="toolbar" aria-label="Konstruktionselemente">
    <span class="grip"></span>
    <button class="btn tb" aria-label="Extrusion"><svg><use href="#f1"/></svg></button>
    <button class="btn tb" aria-label="Extrusionsschnitt"><svg><use href="#f2"/></svg></button><span class="hs"></span>
    <button class="btn tb" aria-label="Rotation"><svg><use href="#f3"/></svg></button>
    <button class="btn tb" aria-label="Rotationsschnitt"><svg><use href="#f4"/></svg></button><span class="hs"></span>
    <button class="btn tb" aria-label="Ausformung"><svg><use href="#f5"/></svg></button>
    <button class="btn tb" aria-label="Ausformungsschnitt"><svg><use href="#f6"/></svg></button><span class="hs"></span>
    <button class="btn tb" aria-label="Austragung"><svg><use href="#f7"/></svg></button>
    <button class="btn tb" aria-label="Austragungsschnitt"><svg><use href="#f8"/></svg></button><span class="hs"></span>
    <button class="btn tb" aria-label="Spirale"><svg><use href="#f9"/></svg></button>
    <button class="btn tb" aria-label="Spiralschnitt"><svg><use href="#f10"/></svg></button><span class="hs"></span>
    <button class="btn tb" aria-label="Verrundung"><svg><use href="#f11"/></svg></button><button class="drop" aria-label="Mehr"></button><span class="hs"></span>
    <button class="btn tb" aria-label="Fläche verschieben"><svg><use href="#f12"/></svg></button><button class="drop" aria-label="Mehr"></button><span class="hs"></span>
    <button class="btn tb" aria-label="Bohrung"><svg><use href="#f13"/></svg></button>
    <button class="btn tb" aria-label="Schale"><svg><use href="#f14"/></svg></button><span class="hs"></span>
    <button class="btn tb" aria-label="Elementmuster"><svg><use href="#f15"/></svg></button><button class="drop" aria-label="Mehr"></button>
    <button class="btn tb" aria-label="Element spiegeln"><svg><use href="#f16"/></svg></button>
    <button class="btn tb" aria-label="Skalieren"><svg><use href="#f17"/></svg></button><span class="hs"></span>
    <button class="btn tb" aria-label="Vereinigen"><svg><use href="#f18"/></svg></button><button class="drop" aria-label="Mehr"></button>
    <button class="btn tb" aria-label="Fläche verdicken"><svg><use href="#f19"/></svg></button><button class="drop" aria-label="Mehr"></button>
    <button class="btn tb" aria-label="Katalogelement"><svg><use href="#f20"/></svg></button><span class="hs"></span>
    <button class="btn tb fx">f(x)</button><span class="hs"></span>
    <button class="btn tb" aria-label="Neu erzeugen"><svg><use href="#f22"/></svg></button><button class="drop" aria-label="Mehr"></button>
  </div>
</main>

<footer class="status d-flex">
  <div class="pane flex-grow-1 me-1"></div>
  <div class="pane p-s d-flex align-items-center justify-content-end"><svg width="14" height="14"><use href="#net"/></svg></div>
</footer>

<script src="https://cdn.jsdelivr.net/npm/bootstrap@5.3.0/dist/js/bootstrap.bundle.min.js"></script>
</body>
</html>
